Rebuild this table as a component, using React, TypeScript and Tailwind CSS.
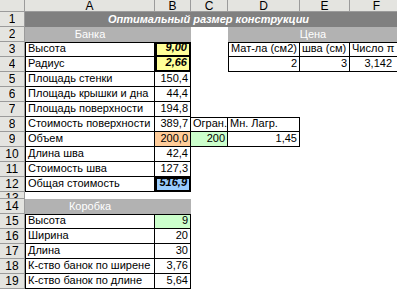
import clsx from 'clsx';

type CellProps = {
  children?: React.ReactNode;
  className?: string;
};

const font = { fontFamily: '"Liberation Sans", Arial, sans-serif' };

// generic spreadsheet cell, text sits on the bottom like in Excel
const Cell = ({ children, className }: CellProps) => (
  <div
    className={clsx(
      'flex items-end overflow-hidden whitespace-nowrap px-[2px] pb-[1px] text-[11px] leading-[13px] text-black',
      className
    )}
  >
    {children}
  </div>
);

const RowHead = ({ n }: { n: number }) => (
  <div className="flex items-center justify-center overflow-hidden border-r border-b border-[#9b9b9b] bg-[#e4e4e0] text-[12px] leading-[12px] text-black">
    <span className="max-h-full overflow-hidden">{n}</span>
  </div>
);

const ColHead = ({ label }: { label: string }) => (
  <div className="flex items-center justify-center border-r border-b border-[#9b9b9b] bg-[#e4e4e0] text-[12px] leading-[12px] text-black">
    {label}
  </div>
);

const thinA = 'border-l border-r border-b border-black';
const thinB = 'border-r border-b border-black justify-end';

const bankRows: [string, string][] = [
  ['Площадь стенки', '150,4'],
  ['Площадь крышки и дна', '44,4'],
  ['Площадь поверхности', '194,8'],
];

const boxRows: [string, string][] = [
  ['Ширина', '20'],
  ['Длина', '30'],
  ['К-ство банок по ширене', '3,76'],
  ['К-ство банок по длине', '5,64'],
];

export default function App() {
  return (
    <div className="h-[289px] w-[397px] overflow-hidden bg-white" style={font}>
      <div className="grid grid-cols-[25px_130px_36px_37px_72px_50px_54px] grid-rows-[12px_repeat(12,15px)_7px_repeat(6,15px)]">
        {/* column headers */}
        <div className="border-r border-b border-[#9b9b9b] bg-[#e4e4e0]" />
        {['A', 'B', 'C', 'D', 'E', 'F'].map((c) => (
          <ColHead key={c} label={c} />
        ))}

        {/* row 1 */}
        <RowHead n={1} />
        <Cell className="col-span-6 justify-center bg-[#808080] pr-[14px] font-bold italic text-white">
          Оптимальный размер конструкции
        </Cell>

        {/* row 2 */}
        <RowHead n={2} />
        <Cell className="justify-center bg-[#b2b2b2] text-white">Банка</Cell>
        <Cell className="bg-[#b2b2b2]" />
        <Cell />
        <Cell className="col-span-3 justify-center bg-[#b2b2b2] pr-[8px] text-white">Цена</Cell>

        {/* row 3 */}
        <RowHead n={3} />
        <Cell className="border border-black">Высота</Cell>
        <Cell className="justify-end border-2 border-black bg-[#ffff99] font-bold italic">9,00</Cell>
        <Cell />
        <Cell className="border border-black px-[1px]">Мат-ла (см2)</Cell>
        <Cell className="border-t border-r border-b border-black px-[1px]">шва (см)</Cell>
        <Cell className="border-t border-b border-black px-[1px]">Число π</Cell>

        {/* row 4 */}
        <RowHead n={4} />
        <Cell className={thinA}>Радиус</Cell>
        <Cell className="justify-end border-x-2 border-b-2 border-black bg-[#ffff99] font-bold italic">2,66</Cell>
        <Cell />
        <Cell className="justify-end border-l border-r border-b border-black">2</Cell>
        <Cell className="justify-end border-r border-b border-black">3</Cell>
        <Cell className="justify-end border-b border-black pr-[12px]">3,142</Cell>

        {/* rows 5-7 */}
        {bankRows.map(([label, value], i) => (
          <div key={label} className="contents">
            <RowHead n={5 + i} />
            <Cell className={thinA}>{label}</Cell>
            <Cell className={thinB}>{value}</Cell>
            <Cell className="col-span-4" />
          </div>
        ))}

        {/* row 8 */}
        <RowHead n={8} />
        <Cell className={thinA}>Стоимость поверхности</Cell>
        <Cell className={thinB}>389,7</Cell>
        <Cell className="border-t border-r border-b border-black px-[1px]">Огран.</Cell>
        <Cell className="border-t border-r border-b border-black px-[1px]">Мн. Лагр.</Cell>
        <Cell className="col-span-2" />

        {/* row 9 */}
        <RowHead n={9} />
        <Cell className={thinA}>Объем</Cell>
        <Cell className={clsx(thinB, 'bg-[#ffcc99]')}>200,0</Cell>
        <Cell className="justify-end border-r border-b border-black bg-[#ccffcc]">200</Cell>
        <Cell className="justify-end border-r border-b border-black">1,45</Cell>
        <Cell className="col-span-2" />

        {/* row 10 */}
        <RowHead n={10} />
        <Cell className={thinA}>Длина шва</Cell>
        <Cell className={thinB}>42,4</Cell>
        <Cell className="col-span-4" />

        {/* row 11 */}
        <RowHead n={11} />
        <Cell className={thinA}>Стоимость шва</Cell>
        <Cell className={thinB}>127,3</Cell>
        <Cell className="col-span-4" />

        {/* row 12 */}
        <RowHead n={12} />
        <Cell className={thinA}>Общая стоимость</Cell>
        <Cell className="justify-end border-2 border-black bg-[#99ccff] font-bold italic">516,9</Cell>
        <Cell className="col-span-4" />

        {/* row 13, squeezed */}
        <RowHead n={13} />
        <Cell className="col-span-6" />

        {/* row 14 */}
        <RowHead n={14} />
        <Cell className="justify-center bg-[#b2b2b2] text-white">Коробка</Cell>
        <Cell className="bg-[#b2b2b2]" />
        <Cell className="col-span-4" />

        {/* row 15 */}
        <RowHead n={15} />
        <Cell className="border border-black">Высота</Cell>
        <Cell className="justify-end border-t border-r border-b border-black bg-[#ccffcc]">9</Cell>
        <Cell className="col-span-4" />

        {/* rows 16-19 */}
        {boxRows.map(([label, value], i) => (
          <div key={label} className="contents">
            <RowHead n={16 + i} />
            <Cell className={thinA}>{label}</Cell>
            <Cell className={thinB}>{value}</Cell>
            <Cell className="col-span-4" />
          </div>
        ))}
      </div>
    </div>
  );
}
